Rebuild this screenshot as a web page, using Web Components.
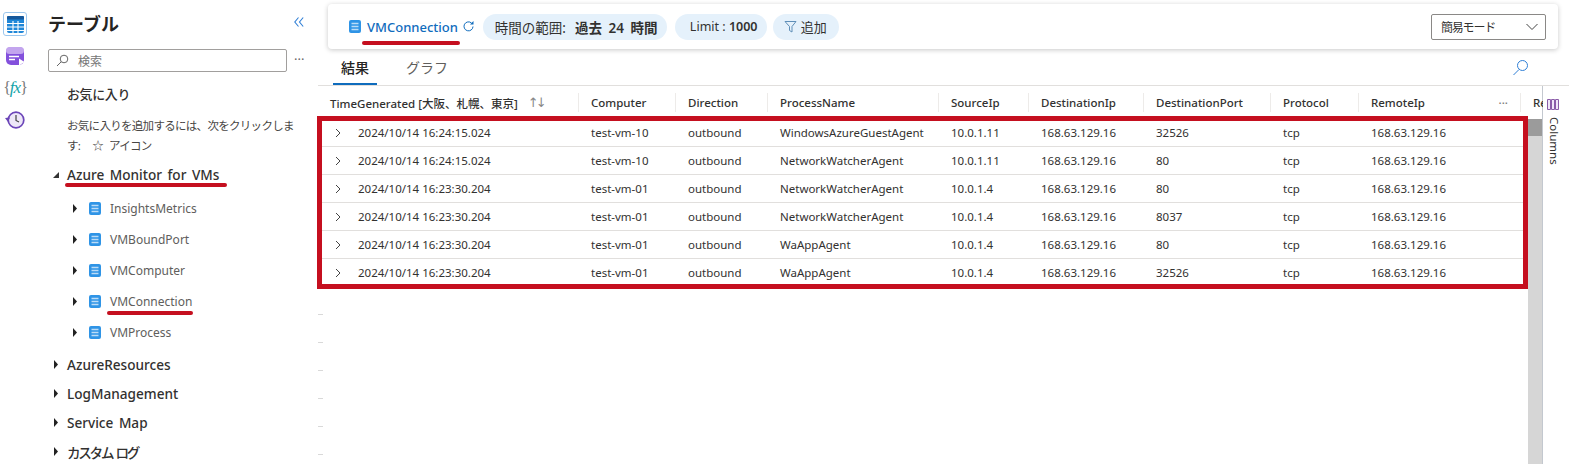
<!DOCTYPE html>
<html lang="ja">
<head>
<meta charset="utf-8">
<title>VMConnection</title>
<style>
  html, body { margin: 0; height: 100%; overflow: hidden; background: #fff; }
  body {
    font-family: "Noto Sans", "Noto Sans CJK JP", sans-serif;
    color: #323130;
    position: relative;
    display: flex;
    width: 1569px;
    height: 464px;
  }
</style>
</head>
<body>
<app-rail></app-rail>
<side-panel>
  <tree-group label="Azure Monitor for VMs" open>
    <tree-item>InsightsMetrics</tree-item>
    <tree-item>VMBoundPort</tree-item>
    <tree-item>VMComputer</tree-item>
    <tree-item>VMConnection</tree-item>
    <tree-item>VMProcess</tree-item>
  </tree-group>
  <tree-group label="AzureResources"></tree-group>
  <tree-group label="LogManagement"></tree-group>
  <tree-group label="Service Map"></tree-group>
  <tree-group label="カスタム ログ" tight></tree-group>
</side-panel>
<main-pane></main-pane>
<red-marks></red-marks>

<script>
const TABLE_ICON = `<svg width="12" height="13" viewBox="0 0 12 13"><rect x="0" y="0" width="12" height="13" rx="2" fill="#2f94e6"/><path d="M2.500 3.500h7M2.500 6.500h7M2.500 9.500h7" stroke="#bcdcf7" stroke-width="1.600"/></svg>`;

class AppRail extends HTMLElement {
  constructor() {
    super();
    this.attachShadow({ mode: "open" }).innerHTML = `
    <style>
      :host { display: flex; flex-direction: column; align-items: center; width: 30px; flex: none; padding: 12px 0 0 0; box-sizing: border-box; }
      .b { width: 24px; height: 24px; display: flex; align-items: center; justify-content: center; box-sizing: border-box; margin-bottom: 8px; }
      .sel { border: 1px solid #9cc7ee; border-radius: 3px; }
      .fx { font: italic 17px "Liberation Serif", serif; color: #13a3a8; white-space: nowrap; letter-spacing: -1px; }
      .fx b { color: #777; font-weight: normal; font-style: normal; font-size: 16px; }
    </style>
    <div class="b sel"><svg width="17" height="17" viewBox="0 0 17 17"><rect x="0" y="0" width="17" height="17" rx="2" fill="#1f87d8"/><rect x="0" y="0" width="17" height="3.500" rx="1" fill="#15589c"/><path d="M0 7.500h17M0 11h17M0 14.500h17M6 5v12M11 5v12" stroke="#fff" stroke-width="1.100"/></svg></div>
    <div class="b"><svg width="19" height="19" viewBox="0 0 19 19"><rect x="0" y="0" width="18" height="18" rx="5" fill="#8350dc"/><rect x="0" y="0" width="18" height="7" rx="3.500" fill="#c3a5ee"/><path d="M3 9.500h10M3 12.500h6" stroke="#fff" stroke-width="1.400"/><path d="M13 11.500l5.500 3.500-5.500 3.500z" fill="#fff"/></svg></div>
    <div class="b"><span class="fx"><b>{</b>fx<b>}</b></span></div>
    <div class="b"><svg width="20" height="18" viewBox="0 0 20 18"><circle cx="11" cy="9" r="7.800" fill="#ede7f8" stroke="#6b45b8" stroke-width="1.700"/><path d="M11 4v5.500l3 1.500" fill="none" stroke="#444" stroke-width="1.200"/><path d="M0 7l5-.5L3 11z" fill="#6b45b8"/></svg></div>`;
  }
}
customElements.define("app-rail", AppRail);

class SidePanel extends HTMLElement {
  constructor() {
    super();
    this.attachShadow({ mode: "open" }).innerHTML = `
    <style>
      :host { display: block; width: 288px; flex: none; box-sizing: border-box; padding: 8px 0 0 18px; overflow: hidden; height: 464px; }
      .head { display: flex; justify-content: space-between; align-items: center; height: 32px; padding-right: 14px; }
      h2 { margin: 0; font-size: 18px; font-weight: 700; color: #252423; line-height: 32px; }
      .collapse { display: flex; margin-top: -4px; }
      .search { display: flex; align-items: center; margin-top: 9px; gap: 6px; }
      .box { width: 239px; height: 23px; border: 1px solid #a19f9d; border-radius: 2px; box-sizing: border-box; display: flex; align-items: center; gap: 9px; padding-left: 7px; font-size: 12px; color: #757575; }
      .more { color: #666; font-size: 13px; margin-left: 1px; margin-top: -4px; }
      .fav { padding: 12px 18px 0 19px; }
      h3 { margin: 0; font-size: 13px; font-weight: 500; color: #323130; line-height: 20px; letter-spacing: -.4px; }
      p { margin: 12px 0 0; font-size: 11.500px; letter-spacing: -.7px; line-height: 20px; color: #484644; width: 232px; white-space: nowrap; }
      .star { margin: 0 6px 0 12px; }
      .tree { padding-top: 4px; }
    </style>
    <div class="head"><h2>テーブル</h2><span class="collapse"><svg width="10" height="10" viewBox="0 0 10 10"><path d="M4.500 .5L.8 5l3.700 4.500M9.200 .5L5.500 5l3.700 4.500" fill="none" stroke="#2f7fd6" stroke-width="1.100"/></svg></span></div>
    <div class="search">
      <div class="box"><svg width="13" height="13" viewBox="0 0 13 13"><circle cx="8" cy="5" r="3.800" fill="none" stroke="#666" stroke-width="1"/><path d="M5.200 7.800L1 12" stroke="#666" stroke-width="1"/></svg><span>検索</span></div>
      <span class="more">···</span>
    </div>
    <div class="fav">
      <h3>お気に入り</h3>
      <p>お気に入りを追加するには、次をクリックしま<br>す:<span class="star">☆</span>アイコン</p>
    </div>
    <div class="tree"><slot></slot></div>`;
  }
}
customElements.define("side-panel", SidePanel);

class TreeGroup extends HTMLElement {
  constructor() {
    super();
    const open = this.hasAttribute("open");
    const label = this.getAttribute("label");
    const tight = this.hasAttribute("tight") ? "letter-spacing:-2.300px;" : "";
    this.attachShadow({ mode: "open" }).innerHTML = `
    <style>
      :host { display: block; }
      .row { display: flex; align-items: center; height: 29px; padding-left: 6px; font-size: 13.600px; word-spacing: 2px; font-weight: 500; color: #323130; gap: 9px; white-space: nowrap; }
      svg { flex: none; width: 4px; height: 9px; }
      .open { width: 6px; height: 6px; margin-right: -1px; margin-left: -1px; }
      .kids { padding: 4px 0 2px; }
    </style>
    <div class="row">${open
      ? `<svg class="open" viewBox="0 0 6 6"><path d="M6 0v6H0z" fill="#333"/></svg>`
      : `<svg viewBox="0 0 4 9"><path d="M0 0l4 4.500L0 9z" fill="#222"/></svg>`}<span style="${tight}">${label}</span></div>
    ${open ? `<div class="kids"><slot></slot></div>` : ``}`;
  }
}
customElements.define("tree-group", TreeGroup);

class TreeItem extends HTMLElement {
  constructor() {
    super();
    this.attachShadow({ mode: "open" }).innerHTML = `
    <style>
      :host { display: flex; align-items: center; height: 31px; padding-left: 25px; font-size: 12px; color: #605e5c; white-space: nowrap; }
      .arrow { width: 4px; height: 9px; margin-right: 12px; }
      .tb { display: flex; margin-right: 9px; }
    </style>
    <svg class="arrow" viewBox="0 0 4 9"><path d="M0 0l4 4.500L0 9z" fill="#222"/></svg>
    <span class="tb">${TABLE_ICON}</span><slot></slot>`;
  }
}
customElements.define("tree-item", TreeItem);

class QueryPill extends HTMLElement {
  constructor() {
    super();
    this.attachShadow({ mode: "open" }).innerHTML = `
    <style>
      :host { display: inline-flex; align-items: center; height: 26px; padding: 0 12px; border-radius: 13px; background: #e5f1fb; font-size: 13.500px; color: #323130; white-space: nowrap; box-sizing: border-box; }
    </style>
    <slot></slot>`;
  }
}
customElements.define("query-pill", QueryPill);

class QueryBar extends HTMLElement {
  constructor() {
    super();
    this.attachShadow({ mode: "open" }).innerHTML = `
    <style>
      :host { display: flex; align-items: center; height: 45px; margin: 4px 11px 0 10px; padding: 0 12px 0 21px; border-radius: 4px; box-sizing: border-box; background: #fff; box-shadow: 0 1px 5px rgba(0,0,0,.22); }
      .name { display: flex; align-items: center; color: #0f6cbd; font-size: 13px; font-weight: 500; margin-right: 8px; }
      .name .tb { display: flex; margin-right: 6px; }
      .name .re { margin-left: 4px; }
      .pills { display: flex; gap: 8px; align-items: center; }
      .pills b { font-weight: 600; }
      .time { width: 184px; }
      .time b { margin-left: 9px; word-spacing: 3px; }
      .lim { font-size: 12.500px; width: 92px; padding: 0 0 0 15px; }
      .add { font-size: 13px; width: 66px; padding: 0 0 0 11px; margin-left: -2px; }
      .f { gap: 4px; display: flex; align-items: center; }
      .sp { flex: 1; }
      .sel { width: 115px; height: 26px; border: 1px solid #8a8886; border-radius: 2px; box-sizing: border-box; display: flex; align-items: center; justify-content: space-between; padding: 0 6px 0 9px; font-size: 12px; color: #323130; }
      .sel span { letter-spacing: -1.200px; }
    </style>
    <span class="name"><span class="tb">${TABLE_ICON}</span><span>VMConnection</span>
      <svg class="re" width="13" height="13" viewBox="0 0 13 13"><path d="M11 6.500A4.500 4.500 0 1 1 9.500 3" fill="none" stroke="#0f6cbd" stroke-width="1"/><path d="M11.500 1v3.500H8z" fill="#0f6cbd"/></svg></span>
    <div class="pills">
      <query-pill class="time">時間の範囲: <b>過去 24 時間</b></query-pill>
      <query-pill class="lim">Limit :&nbsp;<b>1000</b></query-pill>
      <query-pill class="add"><span class="f"><svg width="13" height="13" viewBox="0 0 13 13"><path d="M1 1.500h11L8 6.500v5.500L5.500 10.500v-4z" fill="none" stroke="#5f8fb8" stroke-width="1"/></svg>追加</span></query-pill>
    </div>
    <span class="sp"></span>
    <div class="sel"><span>簡易モード</span><svg width="14" height="8" viewBox="0 0 14 8"><path d="M1.500 1l5.500 5.500L12.500 1" fill="none" stroke="#444" stroke-width="1"/></svg></div>`;
  }
}
customElements.define("query-bar", QueryBar);

class ResultGrid extends HTMLElement {
  constructor() {
    super();
    const cols = [
      ["TimeGenerated [大阪、札幌、東京]", 261], ["Computer", 97], ["Direction", 92], ["ProcessName", 171],
      ["SourceIp", 90], ["DestinationIp", 115], ["DestinationPort", 127], ["Protocol", 88], ["RemoteIp", 162], ["Re", 22]
    ];
    const rows = [
      ["2024/10/14 16:24:15.024","test-vm-10","outbound","WindowsAzureGuestAgent","10.0.1.11","168.63.129.16","32526","tcp","168.63.129.16"],
      ["2024/10/14 16:24:15.024","test-vm-10","outbound","NetworkWatcherAgent","10.0.1.11","168.63.129.16","80","tcp","168.63.129.16"],
      ["2024/10/14 16:23:30.204","test-vm-01","outbound","NetworkWatcherAgent","10.0.1.4","168.63.129.16","80","tcp","168.63.129.16"],
      ["2024/10/14 16:23:30.204","test-vm-01","outbound","NetworkWatcherAgent","10.0.1.4","168.63.129.16","8037","tcp","168.63.129.16"],
      ["2024/10/14 16:23:30.204","test-vm-01","outbound","WaAppAgent","10.0.1.4","168.63.129.16","80","tcp","168.63.129.16"],
      ["2024/10/14 16:23:30.204","test-vm-01","outbound","WaAppAgent","10.0.1.4","168.63.129.16","32526","tcp","168.63.129.16"]
    ];
    const tpl = cols.map(c => c[1] + "px").join(" ");
    const head = cols.map((c, i) => {
      let extra = "";
      if (i === 0) extra = `<span class="sort">↑↓</span>`;
      if (i === 8) extra = `<span class="dots">···</span>`;
      return `<div class="hc${i === 9 ? " last" : ""}"><span class="t">${c[0]}</span>${extra}</div>`;
    }).join("");
    const body = rows.map(r => `<div class="row">` + r.map((v, i) =>
      i === 0
        ? `<div class="c first"><svg width="6" height="10" viewBox="0 0 6 10"><path d="M1 1l4 4-4 4" fill="none" stroke="#444" stroke-width="1"/></svg><span>${v}</span></div>`
        : `<div class="c">${v}</div>`).join("") + `</div>`).join("");
    this.attachShadow({ mode: "open" }).innerHTML = `
    <style>
      :host { display: flex; flex: 1; min-height: 0; border-top: 1px solid #e1dfdd; }
      .left { width: 1224px; flex: none; display: flex; flex-direction: column; font-size: 11.500px; }
      .head, .row { display: grid; grid-template-columns: ${tpl}; }
      .head { height: 33px; align-items: center; flex: none; }
      .hc { display: flex; align-items: center; height: 19px; border-right: 1px solid #edebe9; padding-left: 12px; box-sizing: border-box; white-space: nowrap; overflow: hidden; color: #323130; font-weight: 500; position: relative; }
      .hc.last { border-right: 0; }
      .sort { margin-left: 10px; color: #888; font-size: 13px; font-family: "DejaVu Sans", sans-serif; letter-spacing: -3px; }
      .dots { position: absolute; right: 12px; color: #777; }
      .body { display: flex; flex: 1; min-height: 0; }
      .rows { width: 1210px; flex: none; overflow: hidden; }
      .row { height: 28px; align-items: center; border-bottom: 1px solid #e1dfdd; box-sizing: border-box; color: #323130; }
      .c { padding-left: 12px; white-space: nowrap; overflow: hidden; }
      .c.first { display: flex; align-items: center; gap: 17px; padding-left: 17px; }
      .ticks { padding-top: 27px; }
      .ticks i { display: block; width: 5px; height: 1px; background: #d9d9d9; margin-bottom: 27px; }
      .bar { flex: 1; background: #d6d6d6; }
      .thumb { height: 17px; background: #9b9b9b; }
      .cols { flex: 1; border-left: 1px solid #c3c8cf; display: flex; flex-direction: column; align-items: flex-start; padding: 13px 0 0 4px; font-size: 11.500px; color: #323130; }
      .cols span { writing-mode: vertical-rl; margin-top: 7px; }
    </style>
    <div class="left">
      <div class="head">${head}</div>
      <div class="body">
        <div class="rows">${body}<div class="ticks">${"<i></i>".repeat(6)}</div></div>
        <div class="bar"><div class="thumb"></div></div>
      </div>
    </div>
    <div class="cols"><svg width="12" height="11" viewBox="0 0 12 11"><path d="M.5.500h3v10h-3zM4.500.500h3v10h-3zM8.500.500h3v10h-3z" fill="#f0e6f8" stroke="#8a5ca8"/></svg><span>Columns</span></div>`;
  }
}
customElements.define("result-grid", ResultGrid);

class MainPane extends HTMLElement {
  constructor() {
    super();
    this.attachShadow({ mode: "open" }).innerHTML = `
    <style>
      :host { display: flex; flex-direction: column; flex: 1; min-width: 0; height: 464px; font-size: 12px; }
      .tabs { display: flex; align-items: flex-end; height: 36px; padding: 0 40px 0 15px; gap: 21px; font-size: 14px; flex: none; }
      .tab { height: 26px; line-height: 18px; padding: 0 8px; box-sizing: border-box; color: #605e5c; }
      .tab.on { border-bottom: 2px solid #0f6cbd; color: #252423; font-weight: 500; }
      .sp { flex: 1; }
      .find { align-self: center; margin-top: 0; display: flex; }
    </style>
    <query-bar></query-bar>
    <div class="tabs">
      <span class="tab on">結果</span><span class="tab">グラフ</span><span class="sp"></span>
      <span class="find"><svg width="17" height="17" viewBox="0 0 17 17"><circle cx="10.500" cy="6.500" r="5" fill="none" stroke="#2f7fd6"/><path d="M7 10.500L1.500 16" stroke="#2f7fd6"/></svg></span>
    </div>
    <result-grid></result-grid>`;
  }
}
customElements.define("main-pane", MainPane);

// red annotations drawn over the screenshot
class RedMarks extends HTMLElement {
  constructor() {
    super();
    const line = (x, y, w) => `<i style="left:${x}px;top:${y}px;width:${w}px"></i>`;
    this.attachShadow({ mode: "open" }).innerHTML = `
    <style>
      :host { position: absolute; inset: 0; pointer-events: none; }
      i { position: absolute; height: 4px; border-radius: 2px; background: #c50f1f; }
      .box { position: absolute; left: 317px; top: 116px; width: 1211px; height: 173px; border: 5px solid #c50f1f; box-sizing: border-box; }
    </style>
    ${line(65, 183, 162)}${line(107, 311, 86)}${line(362, 41, 98)}
    <div class="box"></div>`;
  }
}
customElements.define("red-marks", RedMarks);
</script>
</body>
</html>
